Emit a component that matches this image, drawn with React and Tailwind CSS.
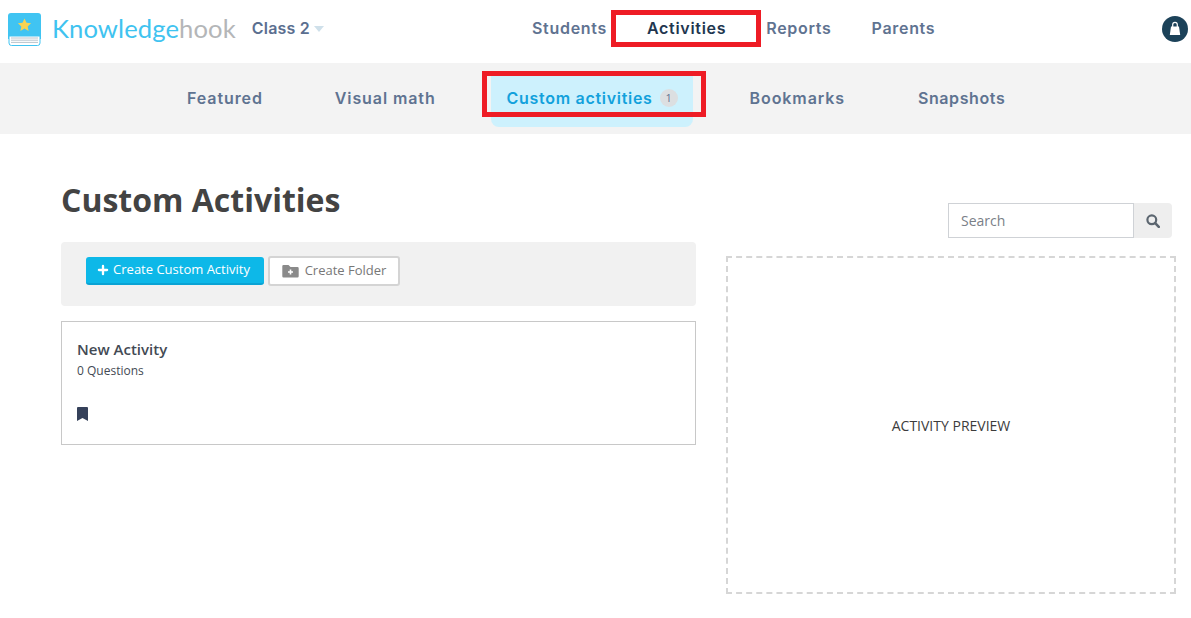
import React from 'react'
import { Plus } from 'lucide-react'

const NAV = ['Students', 'Activities', 'Reports', 'Parents']
const TABS = ['Featured', 'Visual math', 'Custom activities', 'Bookmarks', 'Snapshots']

function Logo() {
  return (
    <svg width="33" height="33" viewBox="0 0 33 33" className="shrink-0">
      <path d="M3 0h27a3 3 0 0 1 3 3v23H0V3a3 3 0 0 1 3-3z" fill="#40c4f2" />
      <path d="M1 23h31v7a2.5 2.5 0 0 1-2.5 2.5h-26A2.5 2.5 0 0 1 1 30z" fill="#fff" stroke="#40c4f2" />
      <path d="M3 25h27M3 27.2h27M3 29.4h27" stroke="#b9c4cc" strokeWidth="1" />
      <path d="M16.5 5.5l2 4.2 4.6.6-3.4 3.1.9 4.5-4.1-2.3-4.1 2.3.9-4.5-3.4-3.1 4.6-.6z" fill="#f7d352" />
    </svg>
  )
}

function BagIcon() {
  return (
    <div className="w-[26px] h-[26px] rounded-full bg-[#1c4259] flex items-center justify-center">
      <svg width="14" height="15" viewBox="0 0 14 15">
        <path d="M4.7 6V3.6a2.3 2.3 0 0 1 4.6 0V6" fill="none" stroke="#fff" strokeWidth="1.2" />
        <path d="M3 5.5h8l1.2 8.5H1.8z" fill="#fff" />
      </svg>
    </div>
  )
}

function SearchGlyph() {
  return (
    <svg width="14" height="14" viewBox="0 0 14 14">
      <circle cx="5.8" cy="5.8" r="4.4" fill="none" stroke="#5c6670" strokeWidth="2.2" />
      <path d="M9.2 9.2l3.6 3.6" stroke="#5c6670" strokeWidth="2.6" strokeLinecap="round" />
    </svg>
  )
}

export default function App() {
  return (
    <div className="relative min-h-[618px] bg-white font-['Open_Sans',sans-serif] overflow-hidden">
      {/* Header */}
      <header className="h-[63px] flex items-center pb-[8px]">
        <div className="w-[532px] shrink-0 flex items-center pl-2">
          <div className="mt-[3px]">
            <Logo />
          </div>
          <span className="ml-[11px] mt-[3px] text-[25.6px] leading-none font-['Lato',sans-serif] font-normal tracking-[0.1px] text-[#3fc3f0]">
            Knowledge<span className="text-[#b4b6b8]">hook</span>
          </span>
          <span className="ml-4 text-[16px] font-semibold font-['Inter',sans-serif] tracking-[0.2px] text-[#5b6f90]">Class 2</span>
          <span className="ml-[4px] mt-[2px] w-0 h-0 border-x-[5px] border-x-transparent border-t-[6px] border-t-[#cfe0ea]" />
        </div>
        <nav className="flex items-center gap-10">
          {NAV.map((n) => (
            <span
              key={n}
              className={`text-[16px] font-semibold font-['Inter',sans-serif] tracking-[0.7px] ${n === 'Activities' ? 'text-[#22364f]' : 'text-[#5f7391]'}`}
            >
              {n}
            </span>
          ))}
        </nav>
        <div className="ml-auto mr-[3px] mt-[2px]">
          <BagIcon />
        </div>
      </header>

      {/* Sub navigation */}
      <div className="h-[71px] bg-[#f3f3f3] flex pl-[171px] pt-[13px]">
        {TABS.map((t) => {
          const active = t === 'Custom activities'
          return active ? (
            <div key={t} className="h-[51px] w-[202px] shrink-0 mr-[41px] rounded-b-lg bg-[#cdf1fd] flex items-center pl-4 pb-[7px]">
              <span className="text-[16px] font-semibold font-['Inter',sans-serif] tracking-[0.7px] text-[#12a1dc]">{t}</span>
              <span className="ml-[7px] w-[18px] h-[18px] rounded-full bg-[#dcdfe1] text-[11px] text-[#5f7391] flex items-center justify-center">1</span>
            </div>
          ) : (
            <div key={t} className={`h-[44px] flex items-center px-4 ${t === 'Featured' ? 'mr-[40px]' : t === 'Visual math' ? 'mr-[39px]' : 'mr-[41px]'}`}>
              <span className={`text-[16px] font-semibold font-['Inter',sans-serif] text-[#5f7391] ${t === 'Snapshots' ? 'tracking-[0.6px]' : 'tracking-[0.9px]'}`}>{t}</span>
            </div>
          )
        })}
      </div>

      {/* Main */}
      <main className="flex pl-[61px] pr-[15px]">
        <div className="w-[635px] shrink-0">
          <h1 className="mt-[43px] text-[32px] leading-[45px] font-bold text-[#434343]">Custom Activities</h1>
          <div className="mt-[20px] h-[64px] rounded bg-[#f1f1f1] flex items-start gap-1 pl-[25px] pt-[14px]">
            <button className="mt-[1px] h-[28px] w-[178px] rounded-[3px] bg-[#0db8e8] border-b-2 border-[#0aa3d4] text-white text-[13px] flex items-center justify-center gap-[3px] pr-[4px]">
              <Plus size={14} strokeWidth={4} />
              Create Custom Activity
            </button>
            <button className="h-[30px] w-[132px] rounded-[3px] bg-white border-2 border-[#d4d4d4] text-[#777] text-[13px] flex items-center justify-center gap-[6px]">
              <svg width="17" height="14" viewBox="0 0 17 14">
                <path d="M1.5 1h5l2 2h7a1.2 1.2 0 0 1 1.2 1.2v8.1a1.2 1.2 0 0 1-1.2 1.2h-14A1.2 1.2 0 0 1 .3 12.3V2.2A1.2 1.2 0 0 1 1.5 1z" fill="#8a8a8a" />
                <path d="M8.5 5.5v5M6 8h5" stroke="#fff" strokeWidth="1.6" />
              </svg>
              Create Folder
            </button>
          </div>
          <div className="mt-[15px] h-[124px] border border-[#c8c8c8] pl-[15px] pt-[17px]">
            <div className="text-[15px] leading-[20px] font-semibold text-[#434a54]">New Activity</div>
            <div className="mt-[4px] text-[12px] leading-[15px] text-[#434a54]">0 Questions</div>
            <svg width="11" height="14" viewBox="0 0 11 14" className="mt-[29px]">
              <path d="M0 1a1 1 0 0 1 1-1h9a1 1 0 0 1 1 1v13L5.5 11 0 14z" fill="#35415a" />
            </svg>
          </div>
        </div>

        <div className="ml-[30px] w-[450px] shrink-0">
          <div className="mt-[69px] ml-[222px] w-[224px] h-[35px] flex">
            <div className="flex-1 border border-[#cfd2d6] flex items-center pl-3 text-[14px] text-[#7a8087]">Search</div>
            <div className="w-[38px] bg-[#eeeeee] rounded-r flex items-center justify-center">
              <SearchGlyph />
            </div>
          </div>
          <div className="mt-[18px] h-[338px] border-2 border-dashed border-[#d6d6d6] flex items-center justify-center pt-[1px] text-[14px] text-[#3c3c3c]">
            ACTIVITY PREVIEW
          </div>
        </div>
      </main>

      {/* Annotation boxes over the page */}
      <div className="absolute left-[611px] top-[10px] w-[150px] h-[37px] border-[5px] border-[#ee1c25]" />
      <div className="absolute left-[482px] top-[71px] w-[224px] h-[46px] border-[5px] border-[#ee1c25]" />
    </div>
  )
}
